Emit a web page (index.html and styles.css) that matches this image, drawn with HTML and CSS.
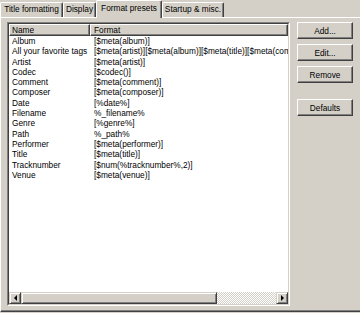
FILE: index.html
```html
<!DOCTYPE html>
<html lang="en">
<head>
    <meta charset="UTF-8">
    <title>Format presets</title>
    <link rel="stylesheet" href="styles.css">
</head>
<body>
    <div class="tabs">
        <div class="tab tab-title">Title formatting</div>
        <div class="tab tab-display">Display</div>
        <div class="tab tab-presets active">Format presets</div>
        <div class="tab tab-startup">Startup &amp; misc.</div>
    </div>

    <div class="panel">
        <div class="listview">
            <div class="list-inner">
                <div class="header">
                    <div class="col col-name">Name</div>
                    <div class="col col-fmt">Format</div>
                </div>
                <div class="rows">
                    <div class="row"><span class="name">Album</span><span class="fmt">[$meta(album)]</span></div>
                    <div class="row"><span class="name">All your favorite tags</span><span class="fmt">[$meta(artist)][$meta(album)][$meta(title)][$meta(comment)]</span></div>
                    <div class="row"><span class="name">Artist</span><span class="fmt">[$meta(artist)]</span></div>
                    <div class="row"><span class="name">Codec</span><span class="fmt">[$codec()]</span></div>
                    <div class="row"><span class="name">Comment</span><span class="fmt">[$meta(comment)]</span></div>
                    <div class="row"><span class="name">Composer</span><span class="fmt">[$meta(composer)]</span></div>
                    <div class="row"><span class="name">Date</span><span class="fmt">[%date%]</span></div>
                    <div class="row"><span class="name">Filename</span><span class="fmt">%_filename%</span></div>
                    <div class="row"><span class="name">Genre</span><span class="fmt">[%genre%]</span></div>
                    <div class="row"><span class="name">Path</span><span class="fmt">%_path%</span></div>
                    <div class="row"><span class="name">Performer</span><span class="fmt">[$meta(performer)]</span></div>
                    <div class="row"><span class="name">Title</span><span class="fmt">[$meta(title)]</span></div>
                    <div class="row"><span class="name">Tracknumber</span><span class="fmt">[$num(%tracknumber%,2)]</span></div>
                    <div class="row"><span class="name">Venue</span><span class="fmt">[$meta(venue)]</span></div>
                </div>
                <div class="hscroll">
                    <div class="sbtn"><span class="arrow-left"></span></div>
                    <div class="track"><div class="thumb"></div></div>
                    <div class="sbtn"><span class="arrow-right"></span></div>
                </div>
            </div>
        </div>

        <div class="buttons">
            <button class="btn">Add...</button>
            <button class="btn">Edit...</button>
            <button class="btn">Remove</button>
            <button class="btn btn-defaults">Defaults</button>
        </div>
    </div>
</body>
</html>
```

FILE: styles.css
```css
body {
    margin: 0;
    width: 360px;
    height: 313px;
    overflow: hidden;
    background-color: #d4d0c8;
    color: #000;
    font-family: "Liberation Sans", Arial, sans-serif;
    font-size: 8.3px;
}
.tabs {
    display: flex;
    align-items: flex-end;
    height: 17px;
    position: relative;
    z-index: 1;
}
.tab {
    box-sizing: border-box;
    height: 15px;
    line-height: 13px;
    text-align: center;
    white-space: nowrap;
    background-color: #d4d0c8;
    border-top: 1px solid #fff;
    border-left: 1px solid #fff;
    border-right: 1px solid #404040;
    border-radius: 2px 2px 0 0;
    box-shadow: inset -1px 0 #808080;
}
.tab-title { width: 63px; }
.tab-display { width: 33px; }
.tab-presets { width: 66px; }
.tab-startup { width: 62px; }
.tab.active {
    height: 18px;
    line-height: 15px;
    margin-bottom: -1px;
}
.panel {
    box-sizing: border-box;
    display: flex;
    align-items: flex-start;
    width: 364px;
    height: 295px;
    padding: 4px 0 0 6px;
    border-top: 1px solid #fff;
    border-left: 1px solid #fff;
    border-bottom: 1px solid #404040;
    box-shadow: inset 0 -1px #808080;
}
.listview {
    box-sizing: border-box;
    width: 283px;
    height: 284px;
    border: 1px solid;
    border-color: #808080 #fff #fff #808080;
}
.list-inner {
    box-sizing: border-box;
    display: flex;
    flex-direction: column;
    height: 100%;
    overflow: hidden;
    background-color: #fff;
    border: 1px solid;
    border-color: #404040 #d4d0c8 #d4d0c8 #404040;
}
.header {
    display: flex;
    height: 12px;
    flex-shrink: 0;
}
.col {
    box-sizing: border-box;
    height: 12px;
    line-height: 10px;
    background-color: #d4d0c8;
    border: 1px solid;
    border-color: #fff #404040 #404040 #fff;
    box-shadow: inset -1px -1px #808080;
}
.col-name {
    width: 81px;
    padding-left: 2px;
}
.col-fmt {
    flex: 1;
    padding-left: 3px;
}
.rows {
    flex: 1;
    overflow: hidden;
}
.row {
    display: flex;
    height: 10.3px;
    line-height: 10.3px;
    white-space: nowrap;
}
.name {
    box-sizing: border-box;
    flex-shrink: 0;
    width: 81px;
    padding-left: 3px;
}
.fmt {
    padding-left: 4px;
}
.hscroll {
    display: flex;
    height: 12px;
    flex-shrink: 0;
}
.sbtn,
.thumb {
    box-sizing: border-box;
    background-color: #d4d0c8;
    border: 1px solid;
    border-color: #d4d0c8 #404040 #404040 #d4d0c8;
    box-shadow: inset 1px 1px #fff, inset -1px -1px #808080;
}
.sbtn {
    width: 12px;
    display: flex;
    align-items: center;
    justify-content: center;
}
.arrow-left {
    width: 0;
    height: 0;
    border-top: 3px solid transparent;
    border-bottom: 3px solid transparent;
    border-right: 3px solid #000;
}
.arrow-right {
    width: 0;
    height: 0;
    border-top: 3px solid transparent;
    border-bottom: 3px solid transparent;
    border-left: 3px solid #000;
}
.track {
    flex: 1;
    display: flex;
    background-color: #d4d0c8;
    background-image: repeating-conic-gradient(#fff 0 25%, #d4d0c8 0 50%);
    background-size: 2px 2px;
}
.thumb {
    width: 196px;
    height: 100%;
}
.buttons {
    display: flex;
    flex-direction: column;
    gap: 5px;
    width: 56px;
    margin-left: 7px;
}
.btn {
    box-sizing: border-box;
    height: 17px;
    padding: 0;
    font-family: inherit;
    font-size: 8.3px;
    color: #000;
    background-color: #d4d0c8;
    border: 1px solid;
    border-color: #fff #404040 #404040 #fff;
    box-shadow: inset -1px -1px #808080;
}
.btn-defaults {
    margin-top: 11px;
}
```
